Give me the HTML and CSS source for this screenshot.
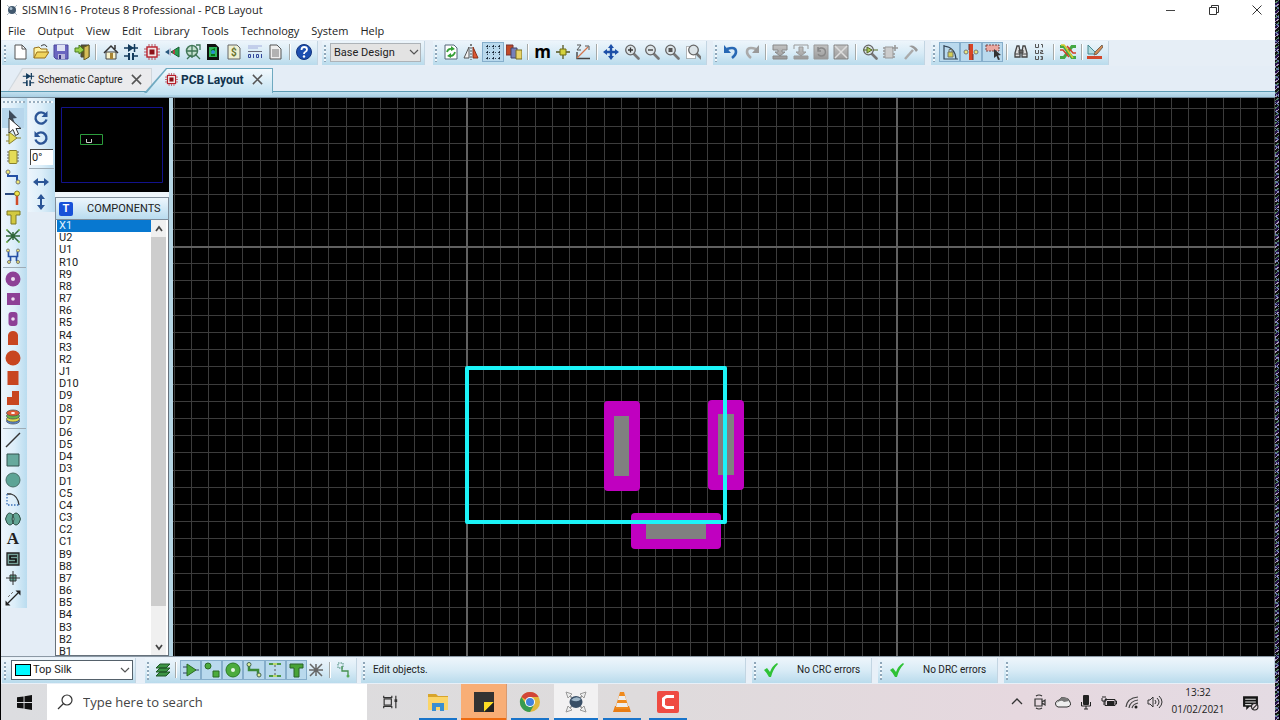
FILE: index.html
```html
<!DOCTYPE html>
<html lang="en">
<head>
<meta charset="utf-8">
<title>SISMIN16 - Proteus 8 Professional - PCB Layout</title>
<link rel="stylesheet" href="styles.css">
</head>
<body>
<svg class="defs" aria-hidden="true">
  <defs>
    <linearGradient id="grey" x2="0" y2="1"><stop stop-color="#c2c2c2"/><stop offset="1" stop-color="#999"/></linearGradient>
    <symbol id="mag" viewBox="0 0 16 16"><path d="M9.500 9.500l5 5" stroke="#777" stroke-width="2.600" stroke-linecap="round"/><circle cx="6.500" cy="6" r="4.800" fill="#dce4e8" stroke="#666" stroke-width="1.300"/></symbol>
    <symbol id="chip" viewBox="0 0 16 16"><path d="M5 0v16M8 0v16M11 0v16M0 5h16M0 8h16M0 11h16" stroke="#b8525c"/><rect x="3" y="3" width="10" height="10" fill="#f0e4e4" stroke="#b8202c" stroke-width="1.400"/><rect x="5.500" y="5.500" width="5" height="5" fill="#8c1018"/></symbol>
    <symbol id="schem" viewBox="0 0 16 16"><path d="M1 4h14M1 12h5M10 12h5M11.500 0v8" stroke="#123a5c" stroke-width="1.500"/><path d="M5 0l6 4-6 4z" fill="#123a5c"/><path d="M6 9v7M10 9v7" stroke="#123a5c" stroke-width="2"/></symbol>
    <symbol id="check" viewBox="0 0 16 16"><path d="M1 8l3-2 3 4q2-6 7-9l1 1q-5 5-7 13H6Q4 11 1 8z" fill="#2fc235"/></symbol>
    <symbol id="close" viewBox="0 0 12 12"><path d="M1 1l10 10M11 1L1 11" stroke="#555" stroke-width="1.700"/></symbol>
    <symbol id="chev" viewBox="0 0 10 10"><path d="M1 3l4 4 4-4" fill="none" stroke="#555" stroke-width="1.200"/></symbol>
    <symbol id="rot" viewBox="0 0 16 16"><path d="M12.500 4.500A5.600 5.600 0 1 0 13.500 9.500" fill="none" stroke="#2b5596" stroke-width="2.400"/><path d="M14.500 1v6H8.500z" fill="#2b5596"/></symbol>
    <symbol id="arrows" viewBox="0 0 16 16"><path d="M3 8h10" stroke="#2b5596" stroke-width="2"/><path d="M0 8l5-4v8zM16 8l-5-4v8z" fill="#2b5596"/></symbol>
  </defs>
</svg>

<header class="titlebar">
  <svg class="app-icon" viewBox="0 0 12 12"><path d="M1 1l10 10M11 1L1 11" stroke="#a9b6c2"/><circle cx="6" cy="6" r="4" fill="#41586e"/><circle cx="5" cy="4.500" r="1.500" fill="#a4b9ca"/></svg>
  <h1 class="title">SISMIN16 - Proteus 8 Professional - PCB Layout</h1>
  <button class="win" aria-label="Minimize"><svg viewBox="0 0 10 10"><path d="M0 5.500h9" stroke="#444"/></svg></button>
  <button class="win" aria-label="Restore"><svg viewBox="0 0 10 10"><path d="M.5 2.500h7v7h-7zM2.500 2.500v-2h7v7h-2" fill="none" stroke="#333"/></svg></button>
  <button class="win" aria-label="Close"><svg viewBox="0 0 10 10"><path d="M.5.5l9 9M9.500.5l-9 9" stroke="#333"/></svg></button>
</header>

<nav class="menubar">
  <button>File</button><button>Output</button><button>View</button><button>Edit</button><button>Library</button><button>Tools</button><button>Technology</button><button>System</button><button>Help</button>
</nav>

<div class="toolbars">
  <div class="group g-file">
    <button class="tool" aria-label="New"><svg viewBox="0 0 16 16"><path d="M3 1h7l4 4v10H3z" fill="#fff" stroke="#555"/><path d="M10 1v4h4" fill="none" stroke="#555"/></svg></button>
    <button class="tool" aria-label="Open"><svg viewBox="0 0 16 16"><path d="M1 14V4l5-1 2 2h6v3" fill="#fff3a0" stroke="#987018"/><path d="M1 14L4 8h12l-4 6z" fill="#f0d45c" stroke="#987018"/><path d="M8 2q4-3 6 1" fill="none" stroke="#333"/></svg></button>
    <button class="tool" aria-label="Save"><svg viewBox="0 0 16 16"><path d="M1 1h14v14H3l-2-2z" fill="#6a66c0" stroke="#4a479a"/><path d="M4 1h8v6H4z" fill="#dfe3f4"/><path d="M5 10h7v5H5z" fill="#b9b8dc"/><path d="M6 11h2v4H6z" fill="#3b3888"/></svg></button>
    <button class="tool" aria-label="Exit"><svg viewBox="0 0 16 16"><path d="M7 1h8v12H7z" fill="#5c5626" stroke="#444"/><path d="M10 3l5-2v12l-5 3z" fill="#d5bd58" stroke="#665a20"/><path d="M1 4h4V1l5 5-5 4V8H1z" fill="#9bd34c" stroke="#4a7c22"/></svg></button>
    <span class="sep"></span>
    <button class="tool" aria-label="Home"><svg viewBox="0 0 16 16"><path d="M3 8h10v7H3z" fill="#f6f2cc" stroke="#444"/><path d="M1 9l7-7 7 7M12 1v4" fill="none" stroke="#333" stroke-width="1.500"/><path d="M7 9h3v6H7z" fill="#a88432"/></svg></button>
    <button class="tool" aria-label="Schematic"><svg viewBox="0 0 16 16"><use href="#schem"/></svg></button>
    <button class="tool" aria-label="PCB"><svg viewBox="0 0 16 16"><use href="#chip"/></svg></button>
    <button class="tool" aria-label="3D view"><svg viewBox="0 0 16 16"><path d="M1 8l6-4v8z" fill="#28577e"/><path d="M7 8l8-5v10z" fill="#28a050" stroke="#165c30"/><path d="M6 4v8" stroke="#dde" stroke-width="1.500"/><path d="M10 6v4" stroke="#d24" stroke-width="1.500"/></svg></button>
    <button class="tool" aria-label="Gerber"><svg viewBox="0 0 16 16"><circle cx="7" cy="7" r="5.500" fill="#c4e0d0" stroke="#477a5c" stroke-width="1.500"/><path d="M1 7h12M7 1v13M11 1h4v5M10 10l5 5M2 15l4-4" fill="none" stroke="#3e7656" stroke-width="1.300"/></svg></button>
    <button class="tool" aria-label="Design explorer"><svg viewBox="0 0 16 16"><path d="M3 1h7l3 3v11H3z" fill="#111" stroke="#111" stroke-width="2"/><path d="M4 3h8v10H4z" fill="#30b45c"/><path d="M6 6l4-2v3L6 9zM6 10h4v2H6z" fill="#071"/><circle cx="8" cy="8" r="2" fill="#2a8fd0"/></svg></button>
    <button class="tool" aria-label="Bill of materials"><svg viewBox="0 0 16 16"><path d="M2 1h9l3 3v11H2z" fill="#eef0d4" stroke="#666"/><text x="5" y="12" class="dollar">$</text></svg></button>
    <button class="tool" aria-label="Source code"><svg viewBox="0 0 16 16"><path d="M1 2h14M1 4h10" stroke="#a2acdc"/><path d="M1 7.500h14" stroke="#667"/><path d="M1.500 10.500v3h2v-3zM6.500 10v4M9.500 10.500v3h2v-3zM14.500 10v4" fill="none" stroke="#33479c"/></svg></button>
    <button class="tool" aria-label="Project notes"><svg viewBox="0 0 16 16"><path d="M3 1h7l4 4v10H3z" fill="#eee" stroke="#555"/><path d="M5 6h7M5 8h7M5 10h7M5 12h7" stroke="#777"/></svg></button>
    <span class="sep"></span>
    <button class="tool" aria-label="Help"><svg viewBox="0 0 16 16"><circle cx="8" cy="8" r="7.500" fill="#1d4fb0" stroke="#14347c"/><path d="M5.500 6q0-3 2.700-3 2.800 0 2.800 2.500 0 1.500-1.500 2.300Q8 8.500 8 10" fill="none" stroke="#fff" stroke-width="1.800"/><circle cx="8" cy="12.500" r="1.200" fill="#fff"/></svg></button>
  </div>
  <div class="group g-variant">
    <select class="variant" aria-label="Design variant"><option>Base Design</option></select>
    <svg class="chev" viewBox="0 0 10 10"><use href="#chev"/></svg>
  </div>
  <div class="group g-view">
    <button class="tool" aria-label="Redraw"><svg viewBox="0 0 16 16"><path d="M2 1h9l3 3v11H2z" fill="#fff" stroke="#567"/><path d="M4 8q1-4 5-3M12 8q-1 4-5 4" fill="none" stroke="#35a035" stroke-width="1.800"/><path d="M8 2l4 3-4 2zM8 9v5l-4-2z" fill="#35a035"/></svg></button>
    <button class="tool" aria-label="Flip"><svg viewBox="0 0 16 16"><path d="M6 3v11H1z" fill="#f4f4f4" stroke="#555"/><path d="M10 3v11h5z" fill="#de5630" stroke="#893018"/><path d="M8 0v16M7 1h3" stroke="#555" stroke-dasharray="2 1"/></svg></button>
    <button class="tool on" aria-label="Grid"><svg viewBox="0 0 16 16"><path d="M1 2.500h15M1 8.500h15M1 14.500h15M2.500 1v15M8.500 1v15M14.500 1v15" stroke="#345" stroke-dasharray="1 2"/><path d="M2 2.500h1M8 2.500h1M14 2.500h1M2 8.500h1M8 8.500h1M14 8.500h1M2 14.500h1M8 14.500h1M14 14.500h1" stroke="#123" stroke-width="1.500"/></svg></button>
    <button class="tool" aria-label="Layers"><svg viewBox="0 0 16 16"><path d="M0 1h7v10H0z" fill="#c04a28" stroke="#733"/><path d="M5 4h6v10H5z" fill="#7580bc" stroke="#446"/><path d="M10 6h6v9h-6z" fill="#e8d468" stroke="#776a22"/></svg></button>
    <span class="sep"></span>
    <button class="tool metric" aria-label="Metric">m</button>
    <button class="tool" aria-label="Origin"><svg viewBox="0 0 16 16"><path d="M8 1v14M1 8h14" stroke="#565620" stroke-width="1.300"/><path d="M5 5h6v6H5z" fill="#d4d23c" stroke="#6c6a14"/></svg></button>
    <button class="tool" aria-label="Polar"><svg viewBox="0 0 16 16"><path d="M2 8v6.500h13" fill="none" stroke="#444" stroke-width="1.400"/><path d="M2 14L13 3" stroke="#d2754d" stroke-width="1.300"/><path d="M2 1h4L2 6h4M10 2h4v4" fill="none" stroke="#555"/></svg></button>
    <span class="sep"></span>
    <button class="tool" aria-label="Pan"><svg viewBox="0 0 16 16"><path d="M8 3v10M3 8h10" stroke="#1d50a8" stroke-width="2.400"/><path d="M8 0l3 4H5zM8 16l3-4H5zM0 8l4-3v6zM16 8l-4-3v6z" fill="#1d50a8"/></svg></button>
    <button class="tool" aria-label="Zoom in"><svg viewBox="0 0 16 16"><use href="#mag"/><path d="M4 6h5M6.500 3.500v5" stroke="#333" stroke-width="1.300"/></svg></button>
    <button class="tool" aria-label="Zoom out"><svg viewBox="0 0 16 16"><use href="#mag"/><path d="M4 6h5" stroke="#333" stroke-width="1.300"/></svg></button>
    <button class="tool" aria-label="Zoom all"><svg viewBox="0 0 16 16"><use href="#mag"/><path d="M4.500 4h4v4h-4z" fill="#555"/></svg></button>
    <button class="tool" aria-label="Zoom area"><svg viewBox="0 0 16 16"><path d="M1.500 2.500h9v12h-9z" fill="#fff" stroke="#777" stroke-dasharray="1 1"/><use href="#mag" x="2"/></svg></button>
  </div>
  <div class="group g-edit">
    <button class="tool" aria-label="Undo"><svg viewBox="0 0 16 16"><path d="M4 5q9-3 9 3 0 3-4 6" fill="none" stroke="#2868b4" stroke-width="2.600"/><path d="M1 1v8h7z" fill="#2868b4"/></svg></button>
    <button class="tool" aria-label="Redo"><svg viewBox="0 0 16 16"><path d="M12 5Q3 2 3 8q0 3 4 6" fill="none" stroke="#aaa" stroke-width="2.600"/><path d="M15 1v8H8z" fill="#999"/></svg></button>
    <span class="sep"></span>
    <button class="tool" aria-label="Block copy"><svg viewBox="0 0 16 16"><path d="M1 1h14v5h-5v2h3l-5 4-5-4h3V6H1zM1 12h14v3H1z" fill="url(#grey)" stroke="#888"/></svg></button>
    <button class="tool" aria-label="Block move"><svg viewBox="0 0 16 16"><path d="M1 5V1h14v4" fill="none" stroke="#999"/><path d="M6 3h4v5h3l-5 4-5-4h3zM1 12h14v3H1z" fill="url(#grey)" stroke="#999"/></svg></button>
    <button class="tool" aria-label="Block rotate"><svg viewBox="0 0 16 16"><path d="M1 1h14v14H1z" fill="url(#grey)" stroke="#999"/><path d="M5 6a4 4 0 1 1 0 4M5 3v4h3" fill="none" stroke="#888" stroke-width="1.500"/></svg></button>
    <button class="tool" aria-label="Block delete"><svg viewBox="0 0 16 16"><path d="M1 1h14v14H1z" fill="url(#grey)" stroke="#888"/><path d="M2 2l12 12M14 2L2 14" stroke="#ddd" stroke-width="1.500"/></svg></button>
    <span class="sep"></span>
    <button class="tool" aria-label="Pick parts"><svg viewBox="0 0 16 16"><use href="#mag"/><path d="M5 3v6l5-3zM1 6h4M11 6h5" fill="#a8c858" stroke="#576b28"/></svg></button>
    <button class="tool" aria-label="Make package"><svg viewBox="0 0 16 16"><path d="M3 3h8v11H3z" fill="#ccc" stroke="#999"/><path d="M1 4h2M1 7h2M1 10h2M1 13h2M11 10h2M11 13h2M10 4h6M13 1v6" stroke="#999" stroke-width="1.600"/></svg></button>
    <button class="tool" aria-label="Decompose"><svg viewBox="0 0 16 16"><path d="M2 15l8-9" stroke="#aaa" stroke-width="2.500"/><path d="M6 2q5-2 9 4l-2 2q-2-4-7-6z" fill="#999"/></svg></button>
  </div>
  <div class="group g-route">
    <button class="tool on" aria-label="Trace angle lock"><svg viewBox="0 0 16 16"><path d="M2 1v14h14M2 2q11 1 12 13" fill="none" stroke="#345" stroke-width="1.200"/><path d="M6 8h5v5H6z" fill="#d3cf55" stroke="#776"/><path d="M7 8V5.500h3V8" fill="none" stroke="#776"/></svg></button>
    <button class="tool on" aria-label="Auto trace style"><svg viewBox="0 0 16 16"><path d="M8 0v16" stroke="#d84424" stroke-width="4"/><circle cx="3" cy="8" r="2" fill="#eee878" stroke="#777"/><circle cx="13" cy="8" r="2" fill="#eee878" stroke="#777"/><path d="M6 0v6M10 10v6" stroke="#633"/></svg></button>
    <button class="tool on" aria-label="Auto trace select"><svg viewBox="0 0 16 16"><path d="M1 1h13v6H1z" fill="#eaa7a0" stroke="#744" stroke-dasharray="2 1"/><path d="M9 5l7 6-3 .5 2 4-2 .5-1.500-4L9 14z" fill="#333"/></svg></button>
    <span class="sep"></span>
    <button class="tool" aria-label="Search"><svg viewBox="0 0 16 16"><path d="M4 2h2l1 6v5H2V9zM10 2h2l2 7v4H9V8z" fill="#ddd" stroke="#444" stroke-width="1.300"/><path d="M6 6h4v3H6zM2 10h5M9 10h5" fill="#666" stroke="#444"/></svg></button>
    <button class="tool" aria-label="Automatic name generator"><svg viewBox="0 0 16 16"><path d="M3.500 0v3.500h3V0M9 .5h1.500v3M3.500 6v3.500h3V6M8.500 6.500h2V8h-2v1.500h3M3.500 12v3.500h3V12M8.500 12.500h2v3h-2M9 14h2" fill="none" stroke="#555"/></svg></button>
    <span class="sep"></span>
    <button class="tool" aria-label="Auto router"><svg viewBox="0 0 16 16"><path d="M0 2.500h4l8 11h4M0 13.500h4l8-11h4" fill="none" stroke="#43a844" stroke-width="3"/><path d="M0 6h3l6 7M16 9h-3L7 2" fill="none" stroke="#d24028" stroke-width="1.500"/><path d="M1 1h3l9 13" fill="none" stroke="#d8cc30" stroke-width="1.500"/></svg></button>
    <span class="sep"></span>
    <button class="tool" aria-label="Design rules"><svg viewBox="0 0 16 16"><path d="M1 1v9h9z" fill="#b2dce0" stroke="#47878e"/><path d="M15 1L8 8l-1 3 3-1 6-7z" fill="#d58c54" stroke="#765"/><path d="M0 12h15v3H0z" fill="#d2482c"/></svg></button>
  </div>
</div>

<div class="tabs" role="tablist">
  <div class="tab tab-schematic" role="tab" aria-selected="false">
    <svg class="tab-icon" viewBox="0 0 16 16"><use href="#schem"/></svg>Schematic Capture
    <button class="tab-close" aria-label="Close Schematic Capture"><svg viewBox="0 0 12 12"><use href="#close"/></svg></button>
  </div>
  <div class="tab active" role="tab" aria-selected="true">
    <svg class="tab-icon" viewBox="0 0 16 16"><use href="#chip"/></svg>PCB Layout
    <button class="tab-close" aria-label="Close PCB Layout"><svg viewBox="0 0 12 12"><use href="#close"/></svg></button>
  </div>
</div>

<main class="work">
  <div class="modes">
    <button class="mode on" aria-label="Selection"><svg viewBox="0 0 16 16"><path d="M4 0l8 8-4 .5 2 5-2 1-2-5-2 2z" fill="#3d4a5a"/></svg></button>
    <button class="mode" aria-label="Component"><svg viewBox="0 0 16 16"><path d="M4 2l8 6-8 6zM1 5h3M1 11h3M12 8h4" fill="#e4dc58" stroke="#87802c"/></svg></button>
    <button class="mode" aria-label="Package"><svg viewBox="0 0 16 16"><path d="M2 3h12M2 6h12M2 9h12M2 12h12" stroke="#666"/><rect x="4" y="1.500" width="8" height="13" rx="1" fill="#e4dc58" stroke="#87802c"/></svg></button>
    <button class="mode" aria-label="Track"><svg viewBox="0 0 16 16"><path d="M3 3v4h9v5" fill="none" stroke="#2450a4" stroke-width="2"/><circle cx="3" cy="3" r="2" fill="#f0ea70" stroke="#777"/><circle cx="13" cy="13" r="2" fill="#f0ea70" stroke="#777"/></svg></button>
    <button class="mode" aria-label="Via"><svg viewBox="0 0 16 16"><path d="M0 5h12" stroke="#2a4a80" stroke-width="2"/><path d="M12 5v11" stroke="#d04c28" stroke-width="2.500"/><circle cx="12" cy="4.500" r="2.500" fill="#f0e44c" stroke="#877c24"/></svg></button>
    <button class="mode" aria-label="Zone"><svg viewBox="0 0 16 16"><path d="M2 2h13v4h-4v9H6V6H2z" fill="#d2c940" stroke="#7e7a24"/></svg></button>
    <button class="mode" aria-label="Ratsnest"><svg viewBox="0 0 16 16"><path d="M2 2l12 12M14 2L2 14M1 8h14M8 4v8" stroke="#2e6639" stroke-width="1.500"/><circle cx="2" cy="2" r="1" fill="#7ab44c"/><circle cx="14" cy="2" r="1" fill="#7ab44c"/><circle cx="2" cy="14" r="1" fill="#7ab44c"/><circle cx="14" cy="14" r="1" fill="#7ab44c"/></svg></button>
    <button class="mode" aria-label="Connectivity"><svg viewBox="0 0 16 16"><path d="M3.500 3v5.500h9V3M5.500 8v5M11.500 8v5" fill="none" stroke="#2450a4" stroke-width="1.700"/><g fill="#f0ea70" stroke="#777"><circle cx="3" cy="2.500" r="1.500"/><circle cx="13" cy="2.500" r="1.500"/><circle cx="4" cy="14" r="1.500"/><circle cx="13" cy="14" r="1.500"/></g></svg></button>
    <span class="rule"></span>
    <button class="mode" aria-label="Round through-hole pad"><svg viewBox="0 0 16 16"><circle cx="8" cy="8" r="7.500" fill="#8d4096"/><circle cx="8" cy="8" r="2" fill="#ecdff0"/></svg></button>
    <button class="mode" aria-label="Square through-hole pad"><svg viewBox="0 0 16 16"><path d="M2 2h13v12H2z" fill="#8d4096"/><circle cx="8" cy="8" r="1.800" fill="#ecdff0"/></svg></button>
    <button class="mode" aria-label="DIL pad"><svg viewBox="0 0 16 16"><rect x="3.500" y="1" width="9" height="14" rx="3" fill="#8d4096"/><circle cx="8" cy="8" r="1.800" fill="#ecdff0"/></svg></button>
    <button class="mode" aria-label="Edge connector pad"><svg viewBox="0 0 16 16"><path d="M3 15V5q1-4 5-4t5 4v10z" fill="#c84620"/></svg></button>
    <button class="mode" aria-label="Circular SMT pad"><svg viewBox="0 0 16 16"><circle cx="8" cy="8" r="7.500" fill="#c84620"/></svg></button>
    <button class="mode" aria-label="Rectangular SMT pad"><svg viewBox="0 0 16 16"><path d="M2.500 1h11v14h-11z" fill="#c84620"/></svg></button>
    <button class="mode" aria-label="Polygonal SMT pad"><svg viewBox="0 0 16 16"><path d="M7 1h7v14H2V7h5z" fill="#c84620"/></svg></button>
    <button class="mode" aria-label="Padstack"><svg viewBox="0 0 16 16"><g stroke="#555" stroke-width=".8"><ellipse cx="8" cy="12" rx="6.500" ry="3" fill="#5488d8"/><ellipse cx="8" cy="10" rx="6.500" ry="3" fill="#e0d848"/><ellipse cx="8" cy="7" rx="6.500" ry="3" fill="#65b448"/><ellipse cx="8" cy="4" rx="6.500" ry="3" fill="#e05c34"/></g><ellipse cx="8" cy="4" rx="2" ry="1" fill="#fff"/></svg></button>
    <span class="rule"></span>
    <button class="mode" aria-label="Line"><svg viewBox="0 0 16 16"><path d="M1 15L15 1" stroke="#333" stroke-width="1.400"/></svg></button>
    <button class="mode" aria-label="Box"><svg viewBox="0 0 16 16"><path d="M2 2h12v12H2z" fill="#67a99d" stroke="#35534e"/></svg></button>
    <button class="mode" aria-label="Circle"><svg viewBox="0 0 16 16"><circle cx="8" cy="8" r="7" fill="#5da496" stroke="#496f68"/></svg></button>
    <button class="mode" aria-label="Arc"><svg viewBox="0 0 16 16"><path d="M2 3h4q7 2 8 11" fill="none" stroke="#333" stroke-width="1.300"/><path d="M2 3v11h12" fill="none" stroke="#3a70b8" stroke-width="1.300" stroke-dasharray="1.500 1.500"/></svg></button>
    <button class="mode" aria-label="Closed path"><svg viewBox="0 0 16 16"><path d="M8 4Q4 0 2 4-1 8 2 12q3 4 6 0 3 4 6 0 3-4 0-8-3-4-6 0zM8 4q-2 4 0 8M8 4q2 4 0 8" fill="#62a595" stroke="#315047"/></svg></button>
    <button class="mode letter" aria-label="Text">A</button>
    <button class="mode" aria-label="Symbol"><svg viewBox="0 0 16 16"><path d="M2 2h12v12H2z" fill="#75a098" stroke="#222" stroke-width="1.300"/><path d="M12 5H5v3h6v3H4" fill="none" stroke="#111" stroke-width="1.700"/></svg></button>
    <button class="mode" aria-label="Marker"><svg viewBox="0 0 16 16"><path d="M8 1v14M1 8h14" stroke="#333"/><path d="M5 5h6v6H5z" fill="#62a595" stroke="#333"/><path d="M8 5v6M5 8h6" stroke="#333"/></svg></button>
    <button class="mode" aria-label="Dimension"><svg viewBox="0 0 16 16"><path d="M3 13L13 3" stroke="#222" stroke-width="1.300"/><path d="M15.500.5v5l-5-5zM.5 15.500v-5l5 5z" fill="#222"/><path d="M3 7l2-2M6 4l2-2" stroke="#777"/></svg></button>
  </div>
  <div class="orient">
    <button class="mode" aria-label="Rotate clockwise"><svg viewBox="0 0 16 16"><use href="#rot"/></svg></button>
    <button class="mode" aria-label="Rotate anti-clockwise"><svg viewBox="0 0 16 16"><g transform="matrix(-1 0 0 1 16 0)"><use href="#rot"/></g></svg></button>
    <input class="angle" aria-label="Rotation angle" value="0°">
    <span class="rule"></span>
    <button class="mode" aria-label="Mirror horizontally"><svg viewBox="0 0 16 16"><use href="#arrows"/></svg></button>
    <button class="mode" aria-label="Mirror vertically"><svg viewBox="0 0 16 16"><g transform="rotate(90 8 8)"><use href="#arrows"/></g></svg></button>
  </div>
  <aside class="panel">
    <svg class="overview" viewBox="0 0 114 94"><rect width="114" height="94"/><path d="M6.500 9.500h101v75H6.500z" fill="none" stroke="#12128c"/><path d="M25.500 36.500h22v10h-22z" fill="none" stroke="#2c9c3c"/><path d="M31.500 41v3.500h5V41" fill="none" stroke="#ccc"/></svg>
    <h2 class="panel-head"><button class="pick" aria-label="Toggle">T</button><span>COMPONENTS</span></h2>
    <div class="listbox">
      <ul class="parts" role="listbox" aria-label="Components">
        <li role="option" aria-selected="true" class="selected">X1</li><li role="option">U2</li><li role="option">U1</li><li role="option">R10</li><li role="option">R9</li><li role="option">R8</li><li role="option">R7</li><li role="option">R6</li><li role="option">R5</li><li role="option">R4</li><li role="option">R3</li><li role="option">R2</li><li role="option">J1</li><li role="option">D10</li><li role="option">D9</li><li role="option">D8</li><li role="option">D7</li><li role="option">D6</li><li role="option">D5</li><li role="option">D4</li><li role="option">D3</li><li role="option">D1</li><li role="option">C5</li><li role="option">C4</li><li role="option">C3</li><li role="option">C2</li><li role="option">C1</li><li role="option">B9</li><li role="option">B8</li><li role="option">B7</li><li role="option">B6</li><li role="option">B5</li><li role="option">B4</li><li role="option">B3</li><li role="option">B2</li><li role="option">B1</li>
      </ul>
      <div class="scroll">
        <button aria-label="Scroll up"><svg viewBox="0 0 10 10"><path d="M2 7l3-4 3 4" fill="none" stroke="#444" stroke-width="1.700"/></svg></button>
        <div class="track"><div class="thumb"></div></div>
        <button aria-label="Scroll down"><svg viewBox="0 0 10 10"><path d="M2 3l3 4 3-4" fill="none" stroke="#444" stroke-width="1.700"/></svg></button>
      </div>
    </div>
  </aside>
  <div class="board">
    <svg role="img" aria-label="Board layout">
      <defs>
        <pattern id="minor" x="35" y="62" width="86" height="86" patternUnits="userSpaceOnUse"><path d="M0 .5h86M0 17.500h86M0 34.500h86M0 52.500h86M0 69.500h86M.5 0v86M17.500 0v86M34.500 0v86M52.500 0v86M69.500 0v86" stroke="#3c3c3c"/></pattern>
        <pattern id="major" x="293" y="148" width="430" height="430" patternUnits="userSpaceOnUse"><path d="M0 1h430M1 0v430" stroke="#606060" stroke-width="2"/></pattern>
      </defs>
      <rect width="100%" height="100%" fill="#000"/>
      <rect width="100%" height="100%" fill="url(#minor)"/>
      <rect width="100%" height="100%" fill="url(#major)"/>
      <g fill="#c000c0"><rect x="431" y="303" width="36" height="90" rx="4"/><rect x="535" y="302" width="36" height="90" rx="4"/><rect x="458" y="415" width="90" height="36" rx="4"/></g>
      <g fill="#808080"><rect x="441" y="318" width="15" height="60"/><rect x="545" y="316" width="16" height="61"/><rect x="473" y="425" width="60" height="16"/></g>
      <rect x="294" y="270" width="258" height="154" fill="none" stroke="#1cf4f8" stroke-width="4" stroke-linejoin="round"/>
    </svg>
  </div>
</main>

<div class="status">
  <div class="group s-layer">
    <span class="swatch"></span>
    <select class="layer" aria-label="Layer"><option>Top Silk</option></select>
    <svg class="chev" viewBox="0 0 10 10"><use href="#chev"/></svg>
  </div>
  <div class="group s-filter">
    <button class="tool" aria-label="Layer filter"><svg viewBox="0 0 16 16"><path d="M5 10h10l-4 4H1zM5 6h10l-4 4H1zM5 2h10l-4 4H1z" fill="#3c9444" stroke="#1e5626"/></svg></button>
    <span class="sep"></span>
    <button class="tool on" aria-label="Components"><svg viewBox="0 0 16 16"><path d="M0 5h4M0 11h4M12 8h4" stroke="#346"/><path d="M4 2l9 6-9 6z" fill="#4cab3c" stroke="#2a6a24"/></svg></button>
    <button class="tool on" aria-label="Graphics"><svg viewBox="0 0 16 16"><g fill="#4cab3c" stroke="#2a6a24"><circle cx="4" cy="4" r="3"/><path d="M9 9h6v6H9z"/></g></svg></button>
    <button class="tool on" aria-label="Pads"><svg viewBox="0 0 16 16"><circle cx="8" cy="8" r="7" fill="#4cab3c" stroke="#2a7a24"/><circle cx="8" cy="8" r="2" fill="#e5f4e2"/></svg></button>
    <button class="tool on" aria-label="Tracks"><svg viewBox="0 0 16 16"><path d="M3 3v5h9v5" fill="none" stroke="#3b8a38" stroke-width="2.500"/><g fill="#dcee98" stroke="#465"><circle cx="3" cy="2.500" r="2"/><circle cx="13" cy="13" r="2"/></g></svg></button>
    <button class="tool on" aria-label="Vias"><svg viewBox="0 0 16 16"><path d="M2 2h12M2 14h12" stroke="#4a9848" stroke-width="2"/><path d="M8 3v10" stroke="#555" stroke-dasharray="2 2"/><path d="M6 1h4v2H6zM6 13h4v2H6z" fill="#b8d870"/></svg></button>
    <button class="tool on" aria-label="Zones"><svg viewBox="0 0 16 16"><path d="M2 2h13v4h-4v9H6V6H2z" fill="#48a336" stroke="#28622a"/></svg></button>
    <button class="tool" aria-label="Ratsnest"><svg viewBox="0 0 16 16"><path d="M2 2l12 12M14 2L2 14M1 8h14M8 2v12" stroke="#666" stroke-width="1.500"/></svg></button>
    <span class="sep"></span>
    <button class="tool" aria-label="Connectivity"><svg viewBox="0 0 16 16"><path d="M3 1h5v5H3z" fill="none" stroke="#487" stroke-dasharray="1.500 1"/><path d="M7 4v5h6v5" fill="none" stroke="#459050" stroke-width="1.300"/><circle cx="13" cy="14" r="1.500" fill="#5a5"/></svg></button>
  </div>
  <div class="group s-hint">Edit objects.</div>
  <div class="group s-rule"><svg class="tick" viewBox="0 0 16 16"><use href="#check"/></svg>No CRC errors</div>
  <div class="group s-rule"><svg class="tick" viewBox="0 0 16 16"><use href="#check"/></svg>No DRC errors</div>
  <div class="group s-rest"></div>
</div>

<footer class="taskbar">
  <button class="start" aria-label="Start"><svg viewBox="0 0 16 16"><path d="M0 2.500l7-1v6H0zM8 1.300L16 0v7.500H8zM0 8.500h7v6l-7-1zM8 8.500h8V16l-8-1.300z" fill="#111"/></svg></button>
  <label class="search"><svg viewBox="0 0 16 16"><circle cx="10" cy="6" r="5" fill="none" stroke="#333" stroke-width="1.200"/><path d="M6.500 9.500L1 15" stroke="#333" stroke-width="1.300"/></svg><input aria-label="Search" placeholder="Type here to search"></label>
  <button class="app view" aria-label="Task view"><svg viewBox="0 0 20 20"><path d="M3 3v2h9V3M3 17v-2h9v2M3.500 6.500h8v7h-8zM16.500 3v14" fill="none" stroke="#333" stroke-width="1.300"/><path d="M15 7h3v3h-3z" fill="#333"/></svg></button>
  <button class="app open" aria-label="File Explorer"><svg viewBox="0 0 22 22"><path d="M1 3h8l2 2h10v14H1z" fill="#d8a52c"/><path d="M1 6h20v13H1z" fill="#fbd568"/><path d="M5 20v-8h12v8h-4v-4H9v4z" fill="#3a8fd0"/></svg></button>
  <button class="app notes" aria-label="Sticky Notes"><svg viewBox="0 0 22 22"><path d="M1 1h20v20H1z" fill="#333"/><path d="M11 11h10l-10 10z" fill="#fbdc24"/><path d="M21 11v10H11z" fill="#222"/></svg></button>
  <button class="app open" aria-label="Chrome"><svg viewBox="0 0 22 22"><circle cx="11" cy="11" r="10" fill="#e2b93c"/><path d="M11 11L2.300 6A10 10 0 0 1 19.700 6H11z" fill="#d24538"/><path d="M2.300 6A10 10 0 0 0 11 21l4.500-8L11 16 7 13z" fill="#389b50"/><circle cx="11" cy="11" r="5" fill="#fff"/><circle cx="11" cy="11" r="4" fill="#4283dc"/></svg></button>
  <button class="app current" aria-label="Proteus"><svg viewBox="0 0 22 22"><path d="M2 2l18 18M20 2L2 20" stroke="#999" stroke-width="1.500"/><path d="M1 1l6 2-4 4zM21 1l-6 2 4 4zM1 21l6-2-4-4zM21 21l-6-2 4-4z" fill="#eee" stroke="#999"/><ellipse cx="11" cy="11" rx="6.500" ry="6" fill="#384e66"/><path d="M6 9q5-5 10-1-3 4-10 1z" fill="#9fb6c8"/></svg></button>
  <button class="app open" aria-label="VLC"><svg viewBox="0 0 22 22"><path d="M4 15h14l2 6H2z" fill="#e87c14"/><path d="M9 1h4l5 17H4z" fill="#f08a1c"/><path d="M8 5h6l1.200 4H6.800zM6 12h10l1 4H5z" fill="#eee"/></svg></button>
  <button class="app open" aria-label="Camtasia"><svg viewBox="0 0 22 22"><rect width="22" height="22" rx="2" fill="#ef4b42"/><path d="M17 4H9L5 7v8l4 3h8v-3h-7l-2-1V8l2-1h7z" fill="#fff"/></svg></button>
  <div class="tray">
    <button aria-label="Show hidden icons"><svg viewBox="0 0 16 16"><path d="M3 10l5-5 5 5" fill="none" stroke="#333" stroke-width="1.300"/></svg></button>
    <button aria-label="Meet now"><svg viewBox="0 0 16 16"><path d="M3 5h7v7H3zM10 8l3-2v5l-3-2M4 2q3-2 6 0M4 14q3 2 6 0" fill="none" stroke="#333" stroke-width="1.200"/></svg></button>
    <button aria-label="OneDrive"><svg viewBox="0 0 16 16"><path d="M3 13q-3-1-2.500-4Q1 7 4 6q2-4 6-2 4 0 5 4 2 4-3 5z" fill="#eee" stroke="#333"/><path d="M2 9q4-4 7-1l5-1Q13 3 10 4 6 2 4 6z" fill="#777"/></svg></button>
    <button aria-label="Microphone"><svg viewBox="0 0 16 16"><rect x="5" y="1" width="6" height="10" rx="1" fill="#222"/><path d="M3.500 8v4h9V8M8 12v3M6 15h4" fill="none" stroke="#222"/></svg></button>
    <button aria-label="Battery"><svg viewBox="0 0 16 16"><path d="M4 5.500h10v6H4zM14 7h1.500v3H14M1 4v3h4V4M2 2v2M4 2v2M3 7v4" fill="none" stroke="#222"/><path d="M6 7h7v4H6z" fill="#222"/></svg></button>
    <button aria-label="Network"><svg viewBox="0 0 16 16"><path d="M2 13Q3 4 14 3M5 14q1-7 9-8M8 14q1-4 6-5" fill="none" stroke="#444" stroke-width="1.200"/><circle cx="12" cy="13" r="1.500" fill="#222"/></svg></button>
    <button aria-label="Volume"><svg viewBox="0 0 16 16"><path d="M1 6h2l3-3v10l-3-3H1zM8 6q2 2 0 4M10 4q4 4 0 8M12 2q6 6 0 12" fill="none" stroke="#333"/></svg></button>
  </div>
  <div class="clock"><time>13:32</time><span>01/02/2021</span></div>
  <button class="bell" aria-label="Notifications"><svg viewBox="0 0 16 16"><path d="M1 2h14v10H7l-3 3v-3H1z" fill="#151515"/><path d="M3 5h10M3 7.500h10M3 10h6" stroke="#ddd"/><circle cx="12" cy="12" r="3" fill="#e4d8de" stroke="#222"/><path d="M10 14l4-4" stroke="#222"/></svg></button>
</footer>
<div class="edge"></div>
<svg class="pointer" viewBox="0 0 14 20"><path d="M1 1v15l4-3.500 2.500 6 3-1.500-2.500-5.500h5z" fill="#fff" stroke="#333"/></svg>
</body>
</html>
```
FILE: styles.css
```css
* { box-sizing: border-box; }
body {
  margin: 0;
  height: 100vh;
  display: flex;
  flex-direction: column;
  overflow: hidden;
  padding-right: 5px;
  border-left: 1px solid #000;
  background: #e4edf6;
  color: #222;
  font-family: Roboto, "Liberation Sans", sans-serif;
  font-size: 11px;
}
button, input, select { font: inherit; color: inherit; }
button { padding: 0; border: 0; background: none; }
svg { display: block; }
.defs { position: absolute; width: 0; height: 0; }

.titlebar { display: flex; align-items: center; flex: none; height: 20px; margin-right: -3px; padding-left: 5px; background: #fff; }
.app-icon { width: 12px; height: 12px; }
.title { flex: 1; margin: 0 0 0 4px; font: 400 11px "Open Sans", sans-serif; line-height: 20px; }
.win { width: 43px; height: 20px; display: grid; place-items: center; }
.win svg { width: 10px; height: 10px; }
.menubar { display: flex; gap: 12px; flex: none; height: 20px; padding-left: 7px; background: #fff; font-family: "Open Sans", sans-serif; }

.toolbars { display: flex; flex: none; height: 26px; padding-left: 1px; background: #e6eef6; }
.group {
  position: relative;
  display: flex;
  align-items: center;
  padding: 0 3px 2px 8px;
  background: linear-gradient(#edf5fb, #d8ebf6 50%, #b9dbec);
  border-right: 1px solid #c3d5e2;
}
.group::before {
  content: "";
  position: absolute;
  left: 2px;
  top: 4px;
  bottom: 3px;
  width: 2px;
  background: repeating-linear-gradient(#8ea6b9 0 2px, #f4f9fc 2px 4px);
}
.toolbars .group { margin-top: 1px; height: 24px; }
.g-file { width: 316px; }
.g-variant { width: 103px; margin-left: 4px; }
.g-view { width: 274px; margin-left: 8px; }
.g-edit { width: 212px; margin-left: 6px; }
.g-route { width: 178px; margin-left: 6px; }
.tool { flex: 1; min-width: 0; height: 20px; display: grid; place-items: center; }
.tool svg { width: 16px; height: 16px; }
.tool.on { background: #b9d9ed; border: 1px solid #86aecb; }
.sep { flex: none; width: 8px; height: 16px; background: linear-gradient(90deg, transparent 3px, #a5a9a8 3px 4px, #fff 4px 5px, transparent 5px); }
.metric { font: 700 17px "Open Sans", sans-serif; line-height: 16px; color: #000; }
.dollar { font: 700 10px Roboto, sans-serif; fill: #68702c; }
.variant { width: 92px; height: 19px; padding: 0 3px; appearance: none; border: 1px solid #adb3b8; border-radius: 0; background: #e3e3e3; }
.chev { position: absolute; right: 5px; width: 10px; height: 10px; pointer-events: none; }

.tabs { position: relative; display: flex; flex: none; height: 32px; padding: 2px 0 6px 7px; background: linear-gradient(transparent 25px, #5d9cb4 25px 26px, #c3e0ef 26px, #a8cfe3 31px, #768b9b 31px); }
.tab { position: relative; z-index: 0; display: flex; align-items: center; height: 23px; padding-left: 14px; width: 144px; white-space: nowrap; font-size: 10px; }
.tab::before, .tab::after { content: ""; position: absolute; z-index: -1; inset: 0; background: #d0d7dd; clip-path: polygon(14px 0, 100% 0, 100% 100%, 0 100%); }
.tab::after { inset: 1px 1px 0 1px; background: #ebebed; }
.tab.active { height: 25px; width: 129px; margin-left: -8px; padding: 0 0 2px 21px; color: #12344e; font-size: 12px; font-weight: 700; z-index: 1; }
.tab.active::before { background: #6ea9c0; clip-path: polygon(22px 0, 100% 0, 100% 100%, 0 100%); }
.tab.active::after { background: linear-gradient(#f2f9fd, #c1e1f1); bottom: -2px; clip-path: polygon(22px 0, 100% 0, 100% 100%, 0 100%); }
.tab-icon { width: 13px; height: 13px; margin-right: 3px; }
.tab-close { margin-left: auto; padding-right: 10px; }
.tab-close svg { width: 11px; height: 11px; }

.work { display: flex; flex: 1; min-height: 0; }
.modes, .orient {
  position: relative;
  display: flex;
  flex-direction: column;
  align-self: flex-start;
  padding-top: 10px;
  background: linear-gradient(90deg, #edf5fc, #dceef9 50%, #badcef);
}
.modes { width: 25px; height: 510px; margin-left: 1px; }
.orient { width: 27px; height: 114px; margin-left: 1px; }
.modes::before, .orient::before { content: ""; position: absolute; top: 3px; left: 1px; right: 2px; height: 2px; background: repeating-linear-gradient(90deg, #9aafc0 0 2px, #f4f9fc 2px 4px); }
.mode { flex: 1; min-height: 0; width: 22px; display: grid; place-items: center; }
.mode svg { width: 16px; height: 16px; }
.orient .mode { width: 25px; }
.mode.on { background: #b7d6ec; }
.rule { flex: none; height: 1px; margin: 1px; background: #9eabb5; }
.orient .rule { margin: 3px 1px; }
.letter { font: 700 17px "Liberation Serif", serif; line-height: 16px; }
.angle { width: 23px; height: 16px; margin-left: 2px; padding: 0 1px; border: 0; border-top: 1px solid #444; border-left: 1px solid #444; background: #fff; }

.panel { display: flex; flex-direction: column; width: 114px; min-height: 0; flex: none; background: #eff6fb; }
.overview { flex: none; width: 100%; height: 94px; }
.panel-head { flex: none; display: flex; align-items: center; gap: 14px; height: 23px; margin: 5px 0 0; padding: 0 3px; font-size: 11px; font-weight: 400; border: 1px solid #7f8d9a; background: linear-gradient(#edf6fc, #b9dcef); }
.pick { width: 14px; height: 14px; border-radius: 2px; background: #1751d8; color: #fff; font-weight: 700; line-height: 14px; }
.listbox { display: flex; flex: 1; min-height: 0; overflow: hidden; padding: 0 2px 0 1px; background: #fff; border: 1px solid #66717b; border-top: 0; }
.parts { flex: 1; display: grid; grid-auto-rows: 1fr; height: 438px; margin: 0; padding: 0; list-style: none; line-height: 12px; }
.parts li { padding-left: 2px; }
.parts .selected { background: #0878d0; color: #dff1ff; }
.scroll { display: flex; flex-direction: column; width: 15px; background: #f0f0f0; }
.scroll button { display: grid; place-items: center; height: 17px; }
.scroll svg { width: 12px; height: 10px; }
.track { flex: 1; min-height: 0; }
.thumb { height: 92%; background: #cdcdcd; }
.board { flex: 1; min-width: 0; border-left: 4px solid #b5d5e4; background: #000; }
.board svg { width: 100%; height: 100%; }

.status { display: flex; flex: none; height: 28px; padding: 1px 0 1px 1px; border-top: 1px solid #8b99a5; background: #e8f0f8; }
.s-layer { width: 134px; padding-left: 9px; padding-right: 2px; }
.layer { width: 100%; height: 20px; padding: 0 21px; appearance: none; border: 1px solid #55616b; border-radius: 0; background: #fff; }
.swatch { position: absolute; left: 13px; width: 16px; height: 12px; border: 1px solid #000; background: #00f8ff; }
.s-filter { width: 212px; margin-left: 9px; }
.s-hint { flex: 1; min-width: 90px; margin-left: 4px; padding-left: 12px; font-size: 10px; }
.s-rule { width: 120px; margin-left: 6px; padding-left: 11px; font-size: 10px; }
.s-rest { width: 271px; margin-left: 6px; }
.tick { width: 16px; height: 16px; margin-right: 18px; }

.taskbar { display: flex; flex: none; height: 36px; background: linear-gradient(90deg, #dcdde0, #dedbdc 50%, #e6d8df 80%, #e4dbe3); }
.start { width: 46px; display: grid; place-items: center; }
.start svg { width: 15px; height: 15px; }
.search { display: flex; align-items: center; width: 320px; padding-left: 10px; background: #fff; }
.search svg { width: 16px; height: 16px; }
.search input { flex: 1; min-width: 0; margin-left: 8px; border: 0; background: none; font: 13px "Open Sans", sans-serif; }
.search input::placeholder { color: #444; opacity: 1; }
.app { position: relative; width: 46px; display: grid; place-items: center; }
.app svg { width: 22px; height: 22px; }
.view { margin-right: 2px; }
.view svg { width: 18px; height: 18px; }
.open::after, .current::after, .notes::after { content: ""; position: absolute; left: 4px; right: 4px; bottom: 0; height: 2px; background: #1974ca; }
.current { background: linear-gradient(90deg, transparent 1px, #f2f1f2 1px 45px, transparent 45px); }
.current::after { left: 1px; right: 1px; }
.notes { background: #f8ae76; border-right: 1px solid #d89a70; }
.notes::after { left: 0; right: 0; background: #ee6b10; }
.tray { display: flex; align-items: center; gap: 7px; margin-left: auto; }
.tray svg { width: 16px; height: 16px; }
.clock { display: flex; flex-direction: column; width: 70px; text-align: center; font: 10px "Open Sans", sans-serif; line-height: 17px; }
.bell { width: 42px; padding-right: 8px; display: grid; place-items: center; }
.bell svg { width: 17px; height: 17px; }

.edge {
  position: absolute;
  inset: 0 0 0 auto;
  width: 5px;
  background:
    linear-gradient(90deg, transparent 4px, #000 4px),
    repeating-linear-gradient(37deg, transparent 0 3px, #67a 3px 4px, transparent 4px 7px),
    repeating-linear-gradient(143deg, #111 0 2px, #586 2px 3px, #214 3px 5px, #a9b 5px 6px);
}
.pointer { position: absolute; left: 8px; top: 117px; width: 14px; height: 20px; pointer-events: none; }
```
